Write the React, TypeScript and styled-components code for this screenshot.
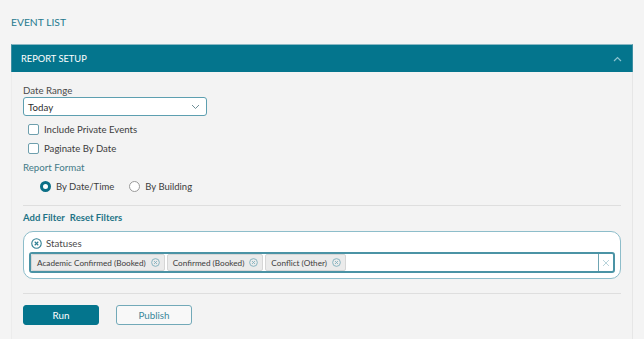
import React from "react";
import styled, { createGlobalStyle } from "styled-components";

const Global = createGlobalStyle`
  html, body { margin: 0; padding: 0; background: #f4f4f4; }
  body { font-family: Lato, "Open Sans", sans-serif; }
  * { box-sizing: border-box; }
`;

const Page = styled.div`
  padding: 15px 11px 0 11px;
  width: 644px;
  height: 339px;
  overflow: hidden;
`;

const Title = styled.h1`
  margin: 0 0 15px 0;
  font-size: 10.3px;
  line-height: 14px;
  font-weight: 400;
  color: #267a8f;
`;

const Panel = styled.section`
  width: 622px;
`;

const PanelHeader = styled.div`
  height: 28px;
  background: #04758d;
  border-top: 1px solid #8ab8c4;
  border-left: 1px solid #3d8ea2;
  border-right: 1px solid #3d8ea2;
  display: flex;
  align-items: center;
  justify-content: space-between;
  padding: 0 10px 0 9px;
  color: #fff;
  font-size: 9.3px;
`;

const PanelBody = styled.div`
  background: #f3f3f3;
  border-left: 1px solid #ececec;
  border-right: 1px solid #e6e6e6;
  padding: 11px 11px 20px 11px;
  display: flex;
  flex-direction: column;
`;

const FieldLabel = styled.div<{ $accent?: boolean; $mt?: number }>`
  font-size: 9.7px;
  line-height: 14px;
  margin-top: ${(p) => p.$mt ?? 0}px;
  color: ${(p) => (p.$accent ? "#447a88" : "#4a4a4a")};
`;

const Select = styled.div`
  width: 184px;
  height: 19px;
  background: #fff;
  border: 1px solid #5d9fb0;
  border-radius: 3px;
  display: flex;
  align-items: center;
  justify-content: space-between;
  padding: 0 6px 0 4px;
  font-size: 9.7px;
  color: #2e2e2e;
`;

const CheckRow = styled.label<{ $mt?: number }>`
  height: 19px;
  margin-top: ${(p) => p.$mt ?? 0}px;
  display: flex;
  align-items: center;
  gap: 5px;
  padding-left: 5px;
  font-size: 9.6px;
  color: #3c3c3c;
`;

const CheckBox = styled.span`
  width: 11px;
  height: 11px;
  border: 1px solid #6e9fad;
  border-radius: 2px;
  background: #fff;
`;

const RadioGroup = styled.div`
  height: 19px;
  margin-top: 3px;
  display: flex;
  align-items: center;
  padding-left: 17px;
  gap: 15px;
`;

const RadioItem = styled.label`
  display: flex;
  align-items: center;
  gap: 5px;
  font-size: 9.5px;
  color: #3c3c3c;
`;

const Radio = styled.span<{ $checked?: boolean }>`
  width: 11px;
  height: 11px;
  border-radius: 50%;
  background: #fff;
  border: ${(p) => (p.$checked ? "3px solid #0b6f86" : "1px solid #9a9a9a")};
`;

const Divider = styled.hr<{ $mt: number }>`
  margin: ${(p) => p.$mt}px 0 0 0;
  border: none;
  border-top: 1px solid #dedede;
  height: 0;
`;

const Links = styled.div`
  margin-top: 5px;
  height: 14px;
  display: flex;
  gap: 5px;
  font-size: 9.5px;
  line-height: 14px;
  font-weight: 700;
  color: #1f7387;
`;

const FilterBox = styled.div`
  margin-top: 6px;
  background: #fff;
  border: 1px solid #8dbdca;
  border-radius: 10px;
  padding: 3px 5px 5px 5px;
`;

const FilterTitle = styled.div`
  height: 16px;
  display: flex;
  align-items: center;
  gap: 4px;
  padding-left: 2px;
  font-size: 9.7px;
  color: #4a4a4a;
  margin-bottom: 1px;
`;

const TagInput = styled.div`
  height: 21px;
  border: 2px solid #4b93a5;
  border-radius: 3px;
  display: flex;
  align-items: stretch;
`;

const Tags = styled.div`
  flex: 1;
  display: flex;
  align-items: center;
  gap: 2px;
`;

const Tag = styled.span`
  height: 17px;
  display: flex;
  align-items: center;
  gap: 5px;
  padding: 0 4px 0 5px;
  background: #ebebeb;
  border: 1px solid #d6d6d6;
  border-radius: 2px;
  font-size: 8.2px;
  color: #3c3c3c;
`;

const ClearBtn = styled.div`
  width: 15px;
  border-left: 1px solid #6fa5b3;
  display: flex;
  align-items: center;
  justify-content: center;
`;

const Buttons = styled.div`
  margin-top: 11px;
  display: flex;
  gap: 17px;
`;

const Button = styled.button<{ $primary?: boolean }>`
  width: 76px;
  height: 20px;
  border-radius: 3px;
  font-family: Lato, sans-serif;
  font-size: 9.8px;
  padding: 0;
  border: 1px solid ${(p) => (p.$primary ? "#04758d" : "#72a9b8")};
  background: ${(p) => (p.$primary ? "#04758d" : "#f8f8f8")};
  color: ${(p) => (p.$primary ? "#fff" : "#3b889c")};
`;

const CircleX = ({ size, color }: { size: number; color: string }) => (
  <svg width={size} height={size} viewBox="0 0 10 10" fill="none">
    <circle cx="5" cy="5" r="4.3" stroke={color} strokeWidth="1" />
    <path d="M3.4 3.4 L6.6 6.6 M6.6 3.4 L3.4 6.6" stroke={color} strokeWidth="1" />
  </svg>
);

export default function App() {
  return (
    <>
      <Global />
      <Page>
        <Title>EVENT LIST</Title>
        <Panel>
          <PanelHeader>
            <span>REPORT SETUP</span>
            <svg width="9" height="6" viewBox="0 0 9 6" fill="none">
              <path d="M1 5 L4.5 1.5 L8 5" stroke="#8cc3cf" strokeWidth="1.2" />
            </svg>
          </PanelHeader>
          <PanelBody>
            <FieldLabel>Date Range</FieldLabel>
            <Select>
              <span>Today</span>
              <svg width="9" height="6" viewBox="0 0 9 6" fill="none">
                <path d="M1 1 L4.5 4.5 L8 1" stroke="#6f8f98" strokeWidth="1" />
              </svg>
            </Select>
            <CheckRow $mt={4}>
              <CheckBox />
              Include Private Events
            </CheckRow>
            <CheckRow>
              <CheckBox />
              Paginate By Date
            </CheckRow>
            <FieldLabel $accent $mt={2}>Report Format</FieldLabel>
            <RadioGroup>
              <RadioItem>
                <Radio $checked />
                By Date/Time
              </RadioItem>
              <RadioItem>
                <Radio />
                By Building
              </RadioItem>
            </RadioGroup>
            <Divider $mt={9} />
            <Links>
              <span>Add Filter</span>
              <span>Reset Filters</span>
            </Links>
            <FilterBox>
              <FilterTitle>
                <CircleX size={11} color="#2f7f93" />
                Statuses
              </FilterTitle>
              <TagInput>
                <Tags>
                  <Tag>
                    Academic Confirmed (Booked)
                    <CircleX size={9} color="#7fb0bd" />
                  </Tag>
                  <Tag>
                    Confirmed (Booked)
                    <CircleX size={9} color="#7fb0bd" />
                  </Tag>
                  <Tag>
                    Conflict (Other)
                    <CircleX size={9} color="#7fb0bd" />
                  </Tag>
                </Tags>
                <ClearBtn>
                  <svg width="8" height="8" viewBox="0 0 8 8" fill="none">
                    <path d="M1 1 L7 7 M7 1 L1 7" stroke="#b9d4db" strokeWidth="1" />
                  </svg>
                </ClearBtn>
              </TagInput>
            </FilterBox>
            <Divider $mt={14} />
            <Buttons>
              <Button $primary>Run</Button>
              <Button>Publish</Button>
            </Buttons>
          </PanelBody>
        </Panel>
      </Page>
    </>
  );
}
